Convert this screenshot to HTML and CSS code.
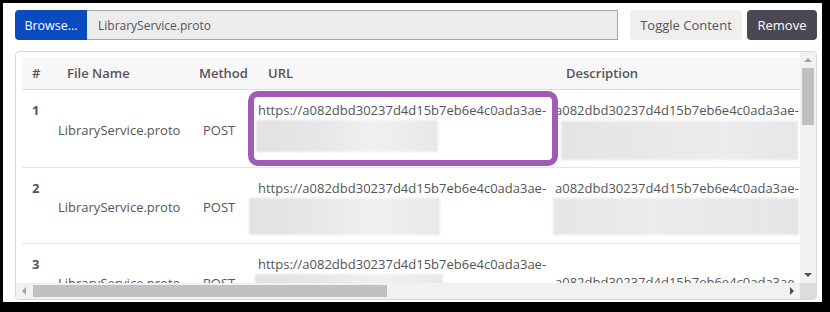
FILE: index.html
```html
<!DOCTYPE html>
<html>
<head>
<meta charset="utf-8">
<link rel="stylesheet" href="styles.css">
</head>
<body>
<div class="frame">
  <div class="toolbar">
    <div class="file-group">
      <button class="btn-browse">Browse...</button>
      <div class="file-name">LibraryService.proto</div>
    </div>
    <button class="btn btn-light">Toggle Content</button>
    <button class="btn btn-dark">Remove</button>
  </div>
  <div class="card">
    <div class="viewport">
      <div class="table">
        <div class="row head">
          <div class="hc">#</div>
          <div class="hc">File Name</div>
          <div class="hc">Method</div>
          <div class="hc">URL</div>
          <div class="hc hc-desc">Description</div>
        </div>
        <div class="row r1">
          <div class="c-num">1</div>
          <div class="c-name">LibraryService.proto</div>
          <div class="c-method">POST</div>
          <div class="c-url">
            <div class="line">https://a082dbd30237d4d15b7eb6e4c0ada3ae-</div>
            <div class="blur blur-u1"></div>
          </div>
          <div class="c-desc">
            <div class="line">a082dbd30237d4d15b7eb6e4c0ada3ae-</div>
            <div class="blur blur-d1"></div>
          </div>
        </div>
        <div class="row r2">
          <div class="c-num">2</div>
          <div class="c-name">LibraryService.proto</div>
          <div class="c-method">POST</div>
          <div class="c-url">
            <div class="line">https://a082dbd30237d4d15b7eb6e4c0ada3ae-</div>
            <div class="blur blur-u2"></div>
          </div>
          <div class="c-desc">
            <div class="line">a082dbd30237d4d15b7eb6e4c0ada3ae-</div>
            <div class="blur blur-d2"></div>
          </div>
        </div>
        <div class="row r3">
          <div class="c-num">3</div>
          <div class="c-name">LibraryService.proto</div>
          <div class="c-method">POST</div>
          <div class="c-url">
            <div class="line">https://a082dbd30237d4d15b7eb6e4c0ada3ae-</div>
            <div class="blur blur-u3"></div>
          </div>
          <div class="c-desc c-desc3">
            <div class="line">a082dbd30237d4d15b7eb6e4c0ada3ae-</div>
          </div>
        </div>
      </div>
    </div>
    <div class="vscroll">
      <div class="sb-btn"><span class="tri tri-up"></span></div>
      <div class="thumb-v"></div>
      <div class="sb-fill"></div>
      <div class="sb-btn"><span class="tri tri-down"></span></div>
    </div>
    <div class="hscroll">
      <div class="sb-btn sb-btn-h"><span class="tri tri-left"></span></div>
      <div class="thumb-h"></div>
      <div class="sb-fill"></div>
      <div class="sb-btn sb-btn-h"><span class="tri tri-right"></span></div>
    </div>
    <div class="corner"></div>
    <div class="highlight"></div>
  </div>
</div>
</body>
</html>
```

FILE: styles.css
```css
* { box-sizing: border-box; }

body {
  margin: 0;
  background: #000;
  font-family: "Open Sans", "DejaVu Sans", sans-serif;
  color: #555;
}

.frame {
  margin: 3px 8px 0 3px;
  height: 299px;
  background: #fff;
  padding: 7px 5px 0 12px;
}

.toolbar {
  display: flex;
  height: 30px;
}

.file-group {
  display: flex;
  flex: 1;
}

.btn-browse {
  width: 72px;
  background: #0b4abf;
  color: #fff;
  border: none;
  border-radius: 4px 0 0 4px;
  font-family: "Open Sans", sans-serif;
  font-size: 12.5px;
  padding: 0;
}

.file-name {
  flex: 1;
  background: #ececec;
  border: 1px solid #a6a6a6;
  border-left: none;
  display: flex;
  align-items: center;
  padding-left: 11px;
  font-size: 12px;
  color: #555;
}

.btn {
  border: none;
  border-radius: 4px;
  font-family: "Open Sans", sans-serif;
  font-size: 13px;
  padding: 0;
}

.btn-light {
  margin-left: 12px;
  width: 112px;
  background: #efefef;
  color: #555;
}

.btn-dark {
  margin-left: 5px;
  width: 70px;
  background: #4b4853;
  color: #fff;
}

.card {
  position: relative;
  margin-top: 11px;
  height: 249px;
  border: 1px solid #d8d8d8;
  border-radius: 4px;
  overflow: hidden;
  display: grid;
  grid-template-columns: 1fr 16px;
  grid-template-rows: 1fr 16px;
}

.viewport {
  overflow: hidden;
  min-width: 0;
  min-height: 0;
  padding: 5px 0 0 6px;
}

.table {
  width: 1133px;
  font-size: 13px;
  line-height: 18px;
}

.row {
  display: grid;
  grid-template-columns: 35px 132px 69px 297px 600px;
  border-bottom: 1px solid #e4e4e4;
}

.head {
  height: 33px;
  background: #f7f7f7;
  align-items: center;
  font-weight: 600;
  border-bottom-color: #dcdcdc;
}

.hc { padding-left: 10px; }
.hc-desc { padding-left: 11px; }

.r1 { height: 78px; }
.r2 { height: 76px; }
.r3 { height: 76px; }

.c-num {
  padding: 11px 0 0 10px;
  font-weight: 700;
}

.c-name {
  align-self: center;
  padding: 3px 0 0 1px;
}

.c-method {
  align-self: center;
  padding: 3px 0 0 14px;
}

.c-url, .c-desc {
  padding-top: 11px;
  white-space: nowrap;
}

.c-desc3 { padding-top: 29px; }

.blur {
  margin-top: 1px;
  background: linear-gradient(90deg, #e2e2e4 0%, #e7e7e9 35%, #f1f1f1 65%, #e8e8ea 100%);
  filter: blur(1px);
}

.blur-u1 { margin-left: -2px; width: 182px; height: 32px; }
.blur-u2 { margin-left: -9px; width: 191px; height: 37px; }
.blur-u3 { margin-left: -3px; width: 188px; height: 37px; }
.blur-d1 { margin-left: 6px; margin-top: 2px; width: 237px; height: 39px; background: linear-gradient(90deg, #e4e4e6 0%, #e9e9eb 40%, #ececee 70%, #e6e6e8 100%); }
.blur-d2 { margin-left: -2px; width: 246px; height: 37px; background: linear-gradient(90deg, #e6e6e8 0%, #ececee 40%, #e9e9eb 70%, #e5e5e7 100%); }

.vscroll {
  background: #f1f1f1;
  display: flex;
  flex-direction: column;
}

.hscroll {
  background: #f1f1f1;
  display: flex;
}

.sb-btn {
  height: 16px;
  display: flex;
  align-items: center;
  justify-content: center;
  flex: none;
}

.sb-btn-h {
  width: 16px;
}

.sb-fill { flex: 1; }

.thumb-v {
  margin: 0 2px;
  height: 57px;
  background: #c1c1c1;
}

.thumb-h {
  margin: 2px 0 2px 1px;
  width: 354px;
  background: #c1c1c1;
}

.corner { background: #dcdcdc; }

.tri {
  width: 0;
  height: 0;
  display: block;
}

.tri-up {
  border-left: 4px solid transparent;
  border-right: 4px solid transparent;
  border-bottom: 4px solid #a3a3a3;
}

.tri-down {
  border-left: 4px solid transparent;
  border-right: 4px solid transparent;
  border-top: 4px solid #505050;
}

.tri-left {
  border-top: 4px solid transparent;
  border-bottom: 4px solid transparent;
  border-right: 4px solid #a3a3a3;
}

.tri-right {
  border-top: 4px solid transparent;
  border-bottom: 4px solid transparent;
  border-left: 4px solid #505050;
}

.highlight {
  position: absolute;
  left: 232px;
  top: 39px;
  width: 310px;
  height: 75px;
  border: 6px solid #a05cb4;
  border-radius: 10px;
}
```
